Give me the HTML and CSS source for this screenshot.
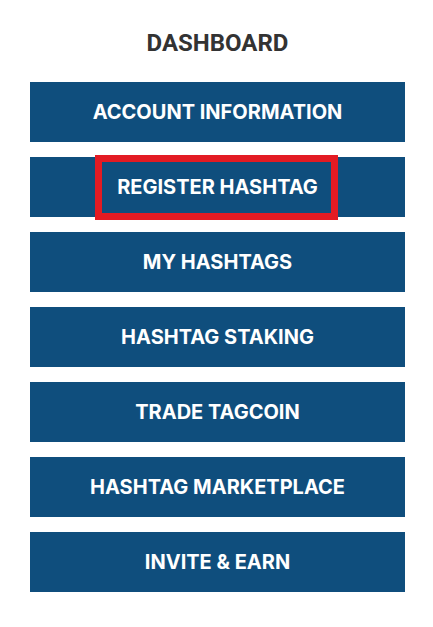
FILE: index.html
```html
<!DOCTYPE html>
<html>
<head>
<meta charset="utf-8">
<link rel="stylesheet" href="styles.css">
</head>
<body>
<div class="dash">
  <h2 class="title">DASHBOARD</h2>
  <nav class="menu">
    <a class="item">ACCOUNT INFORMATION</a>
    <a class="item highlighted">REGISTER HASHTAG<span class="mark"></span></a>
    <a class="item">MY HASHTAGS</a>
    <a class="item">HASHTAG STAKING</a>
    <a class="item">TRADE TAGCOIN</a>
    <a class="item">HASHTAG MARKETPLACE</a>
    <a class="item">INVITE &amp; EARN</a>
  </nav>
</div>
</body>
</html>
```
FILE: styles.css
```css
html, body {
  margin: 0;
  padding: 0;
  background: #fff;
}
.dash {
  width: 375px;
  margin-left: 30px;
  font-family: Inter, Roboto, "Liberation Sans", sans-serif;
}
.title {
  margin: 0;
  padding-top: 29px;
  height: 82px;
  box-sizing: border-box;
  text-align: center;
  font-family: Roboto, "Liberation Sans", sans-serif;
  font-size: 24px;
  font-weight: 700;
  line-height: 28px;
  color: #333;
}
.menu {
  display: flex;
  flex-direction: column;
  gap: 15px;
}
.item {
  position: relative;
  display: flex;
  align-items: center;
  justify-content: center;
  height: 60px;
  background: #0f4e7d;
  color: #fff;
  font-size: 20px;
  font-weight: 700;
}
.mark {
  position: absolute;
  left: 65px;
  top: -2px;
  width: 243px;
  height: 65px;
  box-sizing: border-box;
  border: 7px solid #e31b23;
}
```
